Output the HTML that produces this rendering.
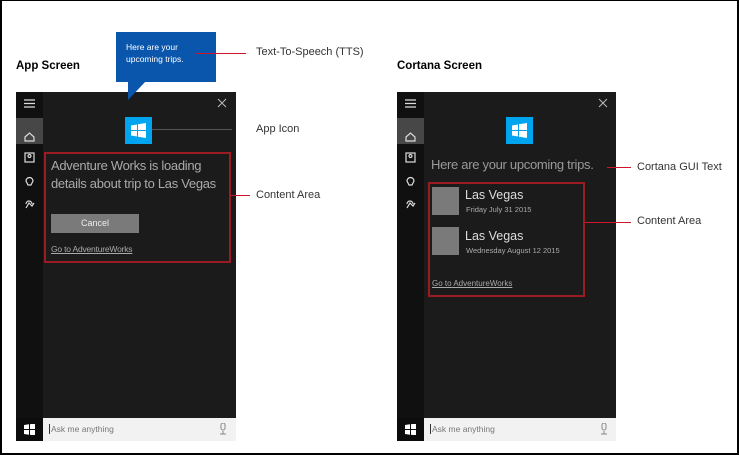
<!DOCTYPE html>
<html><head><style>
*{margin:0;padding:0;box-sizing:border-box}
body{width:739px;height:455px;background:#fff;position:relative;overflow:hidden;font-family:"Liberation Sans",sans-serif}
.a{position:absolute;white-space:nowrap}
.frame{left:0;top:0;width:739px;height:455px;border:2px solid #000;border-top:1px solid #000}
.panel{background:#1b1b1b}
.side{background:#101010}
.lbl{font-size:11px;color:#333}
.red{background:#d0142a;height:1px}
.box{border:2px solid #9b1b22}
</style></head><body>
<div class="a frame"></div>
<div class="a" style="left:16px;top:60px;font-size:11.5px;font-weight:bold">App Screen</div>
<div class="a" style="left:397px;top:60px;font-size:11.5px;font-weight:bold">Cortana Screen</div>

<div class="a panel" style="left:16px;top:92px;width:220px;height:349px"></div>
<div class="a side" style="left:16px;top:92px;width:27px;height:349px"></div>
<div class="a" style="left:16px;top:118px;width:27px;height:26px;background:#474747"></div>
<div class="a" style="left:116px;top:32px;width:100px;height:50px;background:#0a56ad;color:#fff;font-size:8.5px;line-height:12px;padding:9px 10px;white-space:normal">Here are your<br>upcoming trips.</div>
<svg class="a" style="left:120px;top:81px" width="30" height="20"><polygon points="8,0 26,0 8,19" fill="#0a56ad"/></svg>
<div class="a red" style="left:196px;top:53px;width:50px"></div>
<div class="a lbl" style="left:256px;top:46px">Text-To-Speech (TTS)</div>

<div class="a panel" style="left:397px;top:92px;width:219px;height:349px"></div>
<div class="a side" style="left:397px;top:92px;width:27px;height:349px"></div>
<div class="a" style="left:397px;top:118px;width:27px;height:26px;background:#474747"></div>

<svg class="a" style="left:16px;top:92px" width="27" height="140">
<g stroke="#ddd" fill="none" stroke-width="1.2"><path d="M8 8h11M8 11.5h11M8 15h11"/>
<path d="M9 45l4.5-4 4.5 4v4h-9z"/><rect x="9" y="61" width="9" height="9"/><circle cx="13.5" cy="64" r="1.5"/>
<path d="M10 89a3.5 3.5 0 1 1 7 0l-2 4h-3z"/><path d="M10 116l3-5 3 3 2-3M10 112a3 3 0 1 1 6 0"/></g></svg>
<svg class="a" style="left:397px;top:92px" width="27" height="140">
<g stroke="#ddd" fill="none" stroke-width="1.2"><path d="M8 8h11M8 11.5h11M8 15h11"/>
<path d="M9 45l4.5-4 4.5 4v4h-9z"/><rect x="9" y="61" width="9" height="9"/><circle cx="13.5" cy="64" r="1.5"/>
<path d="M10 89a3.5 3.5 0 1 1 7 0l-2 4h-3z"/><path d="M10 116l3-5 3 3 2-3M10 112a3 3 0 1 1 6 0"/></g></svg>
<svg class="a" style="left:217px;top:98px" width="10" height="10"><path d="M1 1l8 8M9 1l-8 8" stroke="#bbb"/></svg>
<svg class="a" style="left:598px;top:98px" width="10" height="10"><path d="M1 1l8 8M9 1l-8 8" stroke="#bbb"/></svg>
<svg class="a" style="left:125px;top:117px" width="27" height="27"><rect width="27" height="27" fill="#00a4ef"/><path d="M6 8.5l6-1v5.5h-6zM13 7.3l8-1.3v7h-8zM6 14h6v5.5l-6-1zM13 14h8v7l-8-1.3z" fill="#fff"/></svg>
<svg class="a" style="left:506px;top:117px" width="27" height="27"><rect width="27" height="27" fill="#00a4ef"/><path d="M6 8.5l6-1v5.5h-6zM13 7.3l8-1.3v7h-8zM6 14h6v5.5l-6-1zM13 14h8v7l-8-1.3z" fill="#fff"/></svg>
<div class="a" style="left:152px;top:129px;width:80px;height:1px;background:#555"></div>
<div class="a lbl" style="left:256px;top:123px">App Icon</div>

<div class="a box" style="left:44px;top:152px;width:187px;height:111px"></div>
<div class="a" style="left:51px;top:157px;font-size:13px;line-height:18px;color:#aaa;letter-spacing:-0.3px">Adventure Works is loading<br>details about trip to Las Vegas</div>
<div class="a" style="left:51px;top:214px;width:88px;height:19px;background:#7a7a7a;color:#eee;font-size:9px;text-align:center;line-height:19px">Cancel</div>
<div class="a" style="left:51px;top:244px;font-size:8.5px;color:#aaa;text-decoration:underline;letter-spacing:-0.2px">Go to AdventureWorks</div>
<div class="a red" style="left:231px;top:195px;width:19px"></div>
<div class="a lbl" style="left:256px;top:189px">Content Area</div>

<div class="a" style="left:431px;top:157px;font-size:13px;color:#999;letter-spacing:-0.3px">Here are your upcoming trips.</div>
<div class="a red" style="left:607px;top:167px;width:24px"></div>
<div class="a lbl" style="left:637px;top:161px">Cortana GUI Text</div>
<div class="a box" style="left:428px;top:182px;width:157px;height:115px"></div>
<div class="a" style="left:432px;top:187px;width:27px;height:28px;background:#7a7a7a"></div>
<div class="a" style="left:465px;top:188px;font-size:12.5px;color:#ddd">Las Vegas</div>
<div class="a" style="left:466px;top:205px;font-size:7.5px;color:#aaa">Friday July 31 2015</div>
<div class="a" style="left:432px;top:227px;width:27px;height:28px;background:#7a7a7a"></div>
<div class="a" style="left:465px;top:229px;font-size:12.5px;color:#ddd">Las Vegas</div>
<div class="a" style="left:466px;top:246px;font-size:7.5px;color:#aaa">Wednesday August 12 2015</div>
<div class="a" style="left:432px;top:279px;font-size:8px;color:#aaa;text-decoration:underline">Go to AdventureWorks</div>
<div class="a red" style="left:585px;top:222px;width:46px"></div>
<div class="a lbl" style="left:637px;top:215px">Content Area</div>

<div class="a" style="left:16px;top:418px;width:27px;height:23px;background:#0c0c0c"></div>
<div class="a" style="left:43px;top:418px;width:193px;height:23px;background:#f2f2f2"></div>
<div class="a" style="left:49px;top:424px;font-size:8.5px;color:#777;border-left:1px solid #333;padding-left:1px">Ask me anything</div>
<svg class="a" style="left:219px;top:423px" width="8" height="12"><rect x="2" y="0" width="4" height="7" rx="2" fill="none" stroke="#888"/><path d="M4 8v3M1 11h6" stroke="#888"/></svg>
<div class="a" style="left:397px;top:418px;width:27px;height:23px;background:#0c0c0c"></div>
<div class="a" style="left:424px;top:418px;width:192px;height:23px;background:#f2f2f2"></div>
<div class="a" style="left:430px;top:424px;font-size:8.5px;color:#777;border-left:1px solid #333;padding-left:1px">Ask me anything</div>
<svg class="a" style="left:600px;top:423px" width="8" height="12"><rect x="2" y="0" width="4" height="7" rx="2" fill="none" stroke="#888"/><path d="M4 8v3M1 11h6" stroke="#888"/></svg>
<svg class="a" style="left:24px;top:424px" width="11" height="11"><path d="M0 1l5-.7v4.7h-5zM6 .2l5-.7v5.5h-5zM0 6h5v4.7l-5-.7zM6 6h5v5.5l-5-.7z" fill="#fff"/></svg>
<svg class="a" style="left:405px;top:424px" width="11" height="11"><path d="M0 1l5-.7v4.7h-5zM6 .2l5-.7v5.5h-5zM0 6h5v4.7l-5-.7zM6 6h5v5.5l-5-.7z" fill="#fff"/></svg>
</body></html>
